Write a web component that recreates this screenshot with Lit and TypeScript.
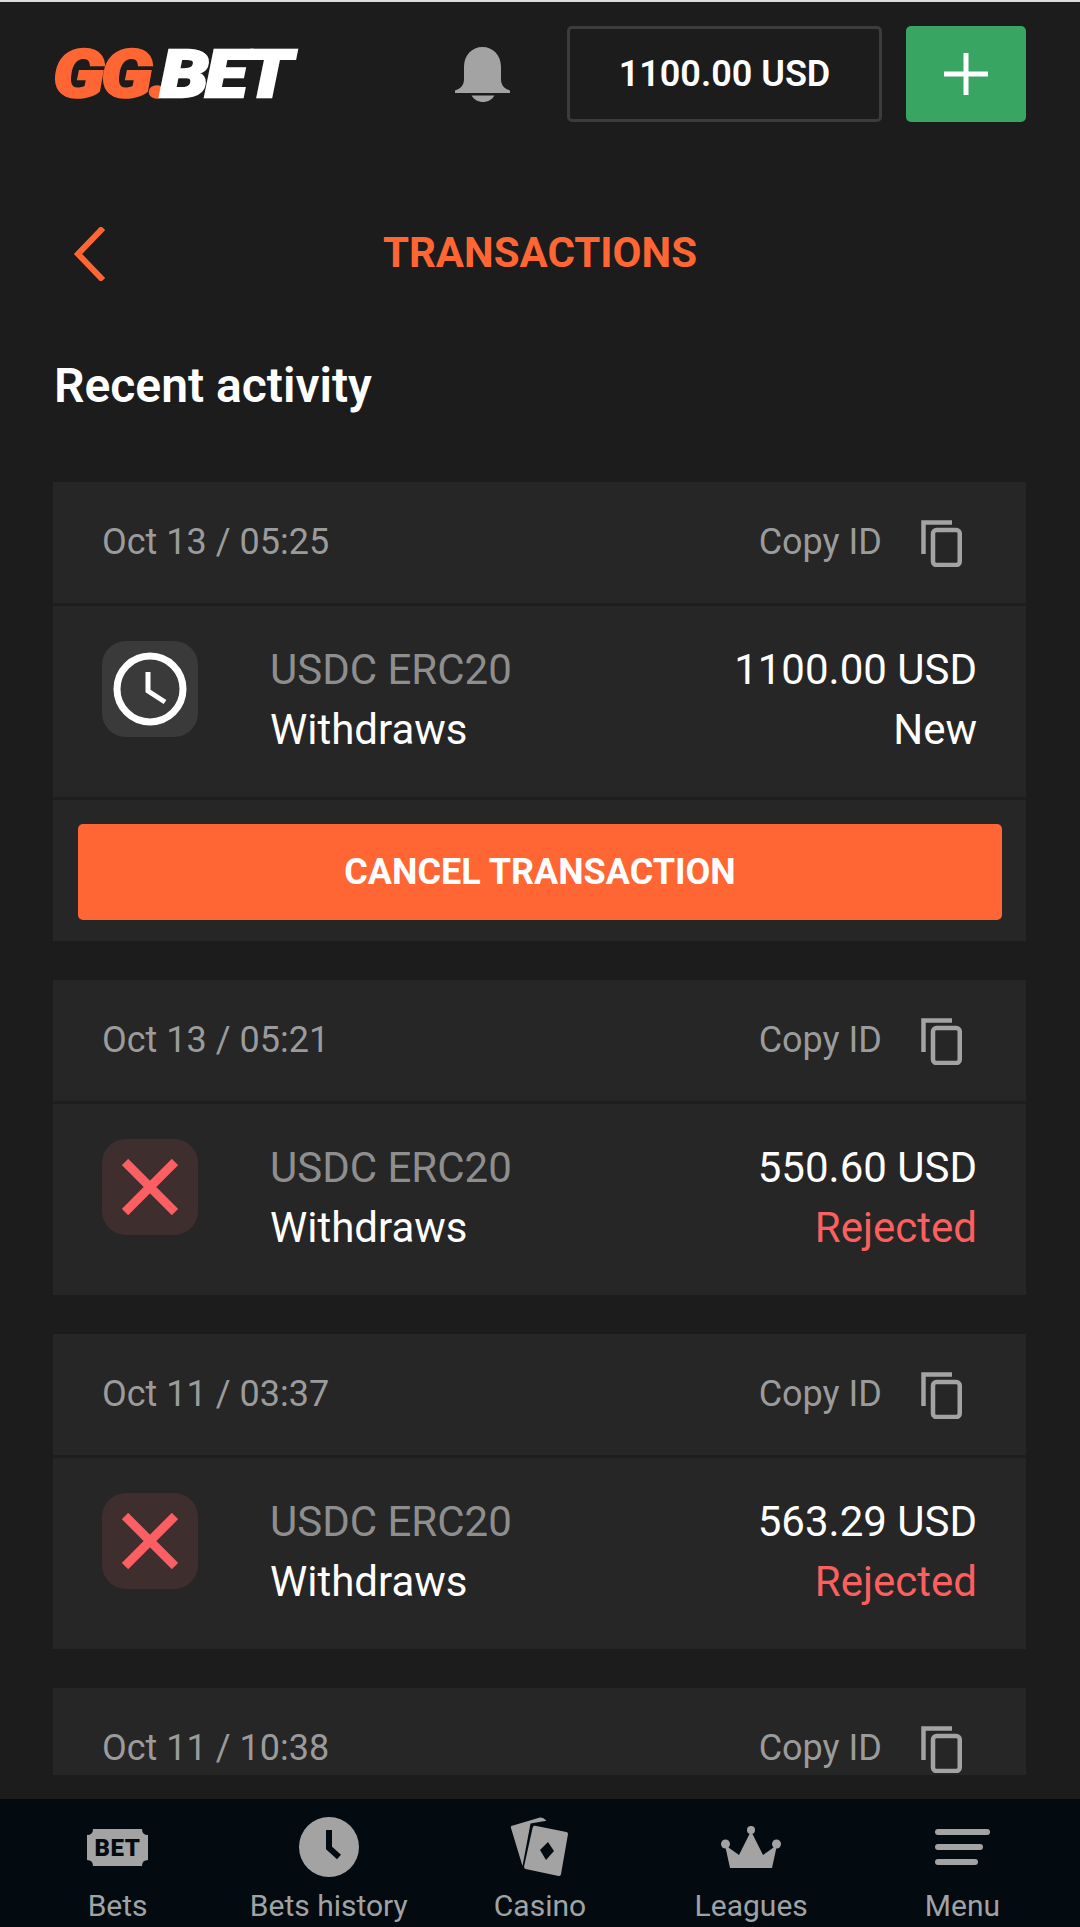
import { LitElement, html, css, svg } from "lit";
import { customElement } from "lit/decorators.js";

type Tx = {
  date: string;
  amount?: string;
  status?: string;
  rejected?: boolean;
  cancel?: boolean;
};

const txs: Tx[] = [
  { date: "Oct 13 / 05:25", amount: "1100.00 USD", status: "New", cancel: true },
  { date: "Oct 13 / 05:21", amount: "550.60 USD", status: "Rejected", rejected: true },
  { date: "Oct 11 / 03:37", amount: "563.29 USD", status: "Rejected", rejected: true },
  { date: "Oct 11 / 10:38" },
];

const copyIcon = html`<svg class="copy" width="41" height="48" viewBox="0 0 41 48" fill="none" stroke="#a3a3a3" stroke-width="4.5">
  <path d="M2.5 35V3.5H31" />
  <rect x="12" y="11" width="26.75" height="35" rx="3.5" />
</svg>`;

const clockIcon = html`<svg width="74" height="74" viewBox="0 0 74 74" fill="none" stroke="#fff">
  <circle cx="37" cy="37" r="33" stroke-width="7" />
  <path d="M35 20V39L52 50" stroke-width="5" />
</svg>`;

const crossIcon = html`<svg width="56" height="56" viewBox="0 0 56 56" fill="none" stroke="#fb5f63" stroke-width="9">
  <path d="M3 3L53 53M53 3L3 53" />
</svg>`;

const navIcons = {
  bets: svg`<svg width="61" height="37" viewBox="0 0 61 37">
    <path fill="#a3a3a3" d="M6 0H55Q55 6 61 6V31Q55 31 55 37H6Q6 31 0 31V6Q6 6 6 0Z" />
    <text x="30.500" y="27" text-anchor="middle" font-family="Roboto, sans-serif" font-weight="900" font-size="24" letter-spacing="0.5" fill="#040b10">BET</text>
  </svg>`,
  history: svg`<svg width="60" height="60" viewBox="0 0 60 60">
    <circle cx="30" cy="30" r="30" fill="#a3a3a3" />
    <path d="M30 13V31L40 40" fill="none" stroke="#040b10" stroke-width="6" />
  </svg>`,
  casino: svg`<svg width="60" height="60" viewBox="0 0 60 60">
    <path fill="#a3a3a3" d="M1 11Q0 9 3 8.500L30 0.500Q33 0 36.500 3.700L20.500 6.500L12.500 49Z" />
    <path fill="#a3a3a3" stroke="#a3a3a3" stroke-width="4" stroke-linejoin="round" d="M24.700 10.700L56 17L49 57L16 50Z" />
    <path fill="#040b10" d="M38 25L44 34L36 43L30 33Z" />
  </svg>`,
  leagues: svg`<svg width="60" height="42" viewBox="0 0 60 42" fill="#a3a3a3">
    <path d="M9 42H51L56 19L42 29L30 5L18 29L4 19Z" />
    <circle cx="30" cy="4" r="4" />
    <circle cx="4.500" cy="18" r="4.500" />
    <circle cx="55.500" cy="18" r="4.500" />
  </svg>`,
  menu: svg`<svg width="55" height="36" viewBox="0 0 55 36" fill="#a3a3a3">
    <rect width="55" height="6" rx="3" />
    <rect y="15" width="48" height="6" rx="3" />
    <rect y="30" width="43" height="6" rx="3" />
  </svg>`,
};

const navItems = [
  { label: "Bets", icon: navIcons.bets },
  { label: "Bets history", icon: navIcons.history },
  { label: "Casino", icon: navIcons.casino },
  { label: "Leagues", icon: navIcons.leagues },
  { label: "Menu", icon: navIcons.menu },
];

@customElement("app-root")
export class AppRoot extends LitElement {
  static styles = css`
    :host {
      display: flex;
      flex-direction: column;
      height: 1927px;
      overflow: hidden;
      background: #1c1c1c;
      border-top: 2px solid #dcdcdc;
      box-sizing: border-box;
      font-family: Roboto, "Liberation Sans", sans-serif;
      color: #fff;
    }

    /* top bar */
    .top {
      display: flex;
      align-items: center;
      height: 96px;
      margin-top: 24px;
      padding: 0 54px 0 53px;
    }
    .logo {
      font-size: 67px;
      line-height: 96px;
      font-weight: 900;
      font-style: italic;
      letter-spacing: -3px;
      -webkit-text-stroke: 2.5px currentColor;
      white-space: nowrap;
      color: #fff;
      transform: scaleX(1.16);
      transform-origin: left center;
    }
    .logo span {
      color: #ff6633;
      margin-right: -7px;
    }
    .bell {
      margin-left: auto;
      margin-right: 57px;
      display: block;
    }
    .balance {
      width: 315px;
      height: 96px;
      box-sizing: border-box;
      border: 3px solid #3c3c3c;
      border-radius: 5px;
      display: flex;
      align-items: center;
      justify-content: center;
      font-size: 36px;
      font-weight: 600;
    }
    .add {
      width: 120px;
      height: 96px;
      margin-left: 24px;
      border-radius: 5px;
      background: #38a562;
      display: flex;
      align-items: center;
      justify-content: center;
    }

    /* page title */
    .title-row {
      display: flex;
      align-items: center;
      justify-content: center;
      position: relative;
      height: 60px;
      margin-top: 100px;
    }
    .back {
      position: absolute;
      left: 73px;
      top: 5px;
    }
    .title {
      color: #ff6633;
      font-size: 42px;
      font-weight: 700;
    }
    h1 {
      margin: 74px 0 0 54px;
      font-size: 48px;
      line-height: 60px;
      font-weight: 600;
    }

    /* list */
    .list {
      margin: 66px 54px 0 53px;
      height: 1293px;
      overflow: hidden;
      display: flex;
      flex-direction: column;
      gap: 39px;
    }
    .card {
      flex: none;
      background: #262626;
    }
    .card-head {
      height: 121px;
      display: flex;
      align-items: center;
      padding: 0 64px 0 49px;
      color: #9b9b9b;
      font-size: 36px;
      line-height: 42px;
    }
    .date {
      margin-top: -1px;
    }
    .copy-id {
      margin-left: auto;
      margin-right: 39px;
      margin-top: -1px;
    }
    .card-body {
      border-top: 3px solid #1e1e1e;
      height: 194px;
      padding: 35px 49px 0;
      box-sizing: border-box;
      display: flex;
      font-size: 42px;
      line-height: 60px;
    }
    .state {
      width: 96px;
      height: 96px;
      border-radius: 24px;
      background: #3a3a3a;
      display: flex;
      align-items: center;
      justify-content: center;
      flex: none;
    }
    .state.rejected {
      background: #3f2e2e;
    }
    .info {
      margin-left: 72px;
      margin-top: -1px;
    }
    .method {
      color: #8e8e8e;
    }
    .sums {
      margin-left: auto;
      margin-top: -1px;
      text-align: right;
    }
    .rejected-text {
      color: #f9605f;
    }
    .card-foot {
      border-top: 3px solid #1e1e1e;
      padding: 24px 24px 21px 25px;
    }
    .cancel {
      height: 96px;
      border-radius: 5px;
      background: #ff6633;
      display: flex;
      align-items: center;
      justify-content: center;
      font-size: 36px;
      font-weight: 700;
    }

    /* bottom nav */
    nav {
      margin-top: auto;
      height: 128px;
      background: #030b10;
      padding: 7px 12px 0;
      box-sizing: border-box;
      display: grid;
      grid-template-columns: repeat(5, 1fr);
      color: #a0a3a5;
      font-size: 30px;
    }
    .nav-item {
      display: flex;
      flex-direction: column;
      align-items: center;
    }
    .nav-icon {
      height: 82px;
      display: flex;
      align-items: center;
      justify-content: center;
    }
  `;

  renderCard(tx: Tx) {
    return html`<div class="card">
      <div class="card-head">
        <span class="date">${tx.date}</span>
        <span class="copy-id">Copy ID</span>
        ${copyIcon}
      </div>
      ${tx.amount
        ? html`<div class="card-body">
            <div class="state ${tx.rejected ? "rejected" : ""}">${tx.rejected ? crossIcon : clockIcon}</div>
            <div class="info">
              <div class="method">USDC ERC20</div>
              <div>Withdraws</div>
            </div>
            <div class="sums">
              <div>${tx.amount}</div>
              <div class=${tx.rejected ? "rejected-text" : ""}>${tx.status}</div>
            </div>
          </div>`
        : ""}
      ${tx.cancel
        ? html`<div class="card-foot"><div class="cancel">CANCEL TRANSACTION</div></div>`
        : ""}
    </div>`;
  }

  render() {
    return html`
      <div class="top">
        <div class="logo"><span>GG.</span>BET</div>
        <svg class="bell" width="55" height="55" viewBox="0 0 55 55" fill="#a3a3a3">
          <path d="M27.500 0C38 0 46 8 46 20V32C46 39 50 42 55 43.500V46H0V43.500C5 42 9 39 9 32V20C9 8 17 0 27.500 0Z" />
          <path d="M16.500 48.500H39.500C37 53 32 55 28 55S19 53 16.500 48.500Z" />
        </svg>
        <div class="balance">1100.00 USD</div>
        <div class="add">
          <svg width="44" height="42" viewBox="0 0 44 42" fill="none" stroke="#fff" stroke-width="5">
            <path d="M22 0V42M0 21H44" />
          </svg>
        </div>
      </div>

      <div class="title-row">
        <svg class="back" width="34" height="54" viewBox="0 0 34 54" fill="none" stroke="#ff6633" stroke-width="6">
          <path d="M30 1L5 27L30 53" />
        </svg>
        <span class="title">TRANSACTIONS</span>
      </div>

      <h1>Recent activity</h1>

      <div class="list">${txs.map((t) => this.renderCard(t))}</div>

      <nav>
        ${navItems.map(
          (n) => html`<div class="nav-item">
            <div class="nav-icon">${n.icon}</div>
            <div>${n.label}</div>
          </div>`
        )}
      </nav>
    `;
  }
}
